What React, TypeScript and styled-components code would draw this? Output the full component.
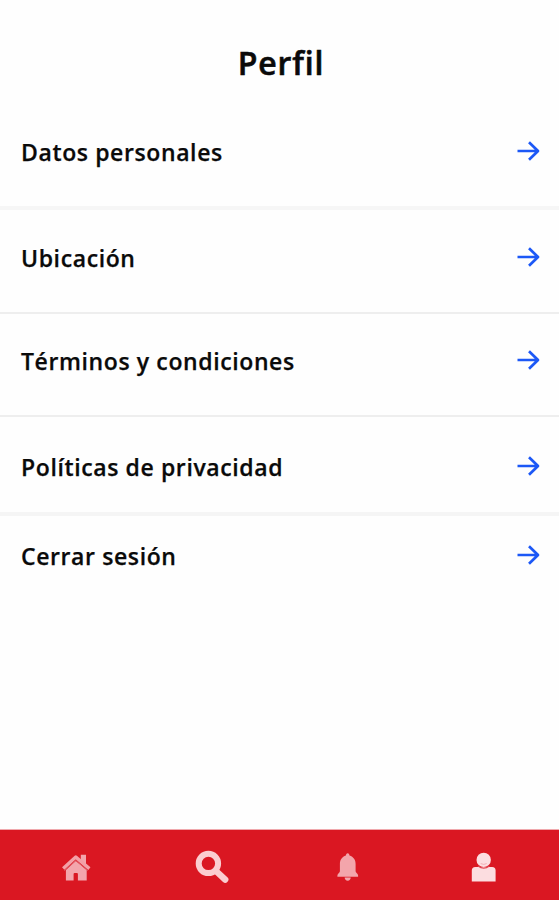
import React from "react";
import styled, { createGlobalStyle } from "styled-components";

const GlobalStyle = createGlobalStyle`
  *{box-sizing:border-box}
  body{margin:0;background:#fefefe;font-family:"Open Sans","Noto Sans",sans-serif;color:#0a0a0a}
`;
const Screen = styled.main`height:900px;display:flex;flex-direction:column;overflow:hidden;`;
const Title = styled.h1`
  margin:0;height:99px;padding:40px 0 0 3px;text-align:center;
  font-size:32px;line-height:46px;font-weight:600;letter-spacing:.9px;
  -webkit-text-stroke:.6px #0a0a0a;
`;
const List = styled.nav`flex:1;display:flex;flex-direction:column;`;
const Row = styled.a<{ $height: number; $top: number; $line: number; $tone: string }>`
  height:${p => p.$height}px;padding:${p => p.$top}px 19px 0 21px;
  display:flex;align-items:flex-start;justify-content:space-between;
  border-bottom:${p => p.$line}px solid ${p => p.$tone};
`;
const Label = styled.span`
  font-size:23px;line-height:32px;font-weight:600;letter-spacing:.61px;
  -webkit-text-stroke:.25px #0a0a0a;
`;
const ArrowSvg = styled.svg`width:24px;height:24px;margin-top:3px;`;
const TabBar = styled.footer`
  height:71px;background:#da1722;border-top:1px solid #f0a9ad;
  display:grid;grid-template-columns:repeat(4,136px);
  padding:0 8px;align-items:center;justify-items:center;
`;
const TabIcon = styled.svg`width:40px;height:40px;margin-top:4px;`;

const rows = [
  { label: "Datos personales", height: 111, top: 37, line: 4, tone: "#f6f6f6" },
  { label: "Ubicación", height: 104, top: 32, line: 2, tone: "#eeeeee" },
  { label: "Términos y condiciones", height: 103, top: 31, line: 2, tone: "#eeeeee" },
  { label: "Políticas de privacidad", height: 99, top: 34, line: 4, tone: "#f5f5f5" },
  { label: "Cerrar sesión", height: 80, top: 24, line: 0, tone: "transparent" },
];

const Arrow = () => (
  <ArrowSvg viewBox="0 0 24 24" fill="none" stroke="#1c58f6" strokeWidth="2.7" strokeLinejoin="round">
    <path d="M1.5 12H22M13 3.2L22 12L13 20.8" />
  </ArrowSvg>
);

export default function App() {
  return (
    <>
      <GlobalStyle />
      <Screen>
        <Title>Perfil</Title>
        <List>
          {rows.map(r => (
            <Row key={r.label} $height={r.height} $top={r.top} $line={r.line} $tone={r.tone}>
              <Label>{r.label}</Label><Arrow />
            </Row>
          ))}
        </List>
        <TabBar>
          <TabIcon viewBox="0 0 40 40">
            <path fill="#f3a5ac" d="M24.8 7.7h5.2V19l-5.2-4z" />
            <path fill="#f3a5ac" d="M19.8 14L30.7 23v10.6h-8.8V27q0-1-1-1h-2.3q-1 0-1 1v6.6H9.9V23z" />
            <path fill="none" stroke="#e35c66" strokeWidth="1" d="M8.4 23.6L19.8 13.4L31.6 23.6" />
            <path fill="none" stroke="#f3a0a7" strokeWidth="3.4" strokeLinejoin="round" d="M7.2 21.6L19.8 10.1L33.4 21.6" />
          </TabIcon>
          <TabIcon viewBox="0 0 40 40" fill="none" stroke="#fbcdd0">
            <circle cx="16.4" cy="16.4" r="9.7" strokeWidth="6" />
            <path d="M24 24l9.2 8.6" strokeWidth="6.4" strokeLinecap="round" />
          </TabIcon>
          <TabIcon viewBox="0 0 40 40" fill="#f3a5ab">
            <path d="M19.7 6.3c1.2 0 1.7 1.1 1.8 2.2 4 1.2 6.1 4.4 6.1 8.5v7.2c0 1.6 2.5 2.5 2.5 4.2v1.3H9.4v-1.3c0-1.7 2.5-2.6 2.5-4.2V17c0-4.1 2.1-7.3 6-8.5.1-1.1.6-2.2 1.8-2.2z" />
            <path d="M16.7 30.6h6c0 2-1.2 3.1-3 3.1s-3-1.1-3-3.1z" />
          </TabIcon>
          <TabIcon viewBox="0 0 40 40" fill="#fcdde0">
            <path d="M7.8 34.5V23.5q0-3.5 3.5-3.5h16.8q3.5 0 3.5 3.5v11z" />
            <circle cx="19.7" cy="12.9" r="7.2" />
            <path d="M14 19q5.7 4.2 11.4 0" fill="none" stroke="#e34752" strokeWidth="1.2" />
            <path d="M16.7 16.6q3 1.6 6 0" fill="none" stroke="#efa2a8" strokeWidth=".8" />
          </TabIcon>
        </TabBar>
      </Screen>
    </>
  );
}
